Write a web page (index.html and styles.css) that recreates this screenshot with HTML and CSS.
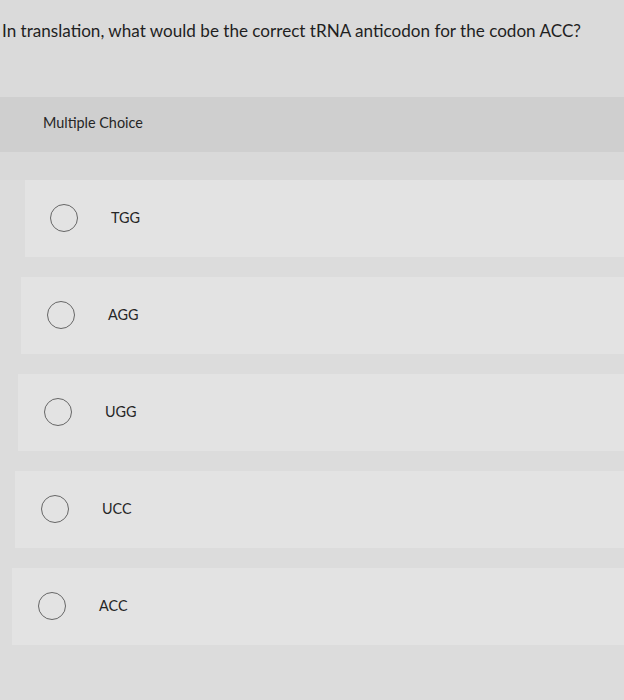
FILE: index.html
```html
<!DOCTYPE html>
<html lang="en">
<head>
<meta charset="utf-8">
<title>Multiple Choice</title>
<link rel="stylesheet" href="styles.css">
</head>
<body>
<div class="page">
  <div class="question">In translation, what would be the correct tRNA anticodon for the codon ACC?</div>
  <div class="type-bar">Multiple Choice</div>
  <div class="spacer"></div>
  <ul class="options">
    <li class="option o1"><span class="radio"></span><span class="label">TGG</span></li>
    <li class="option o2"><span class="radio"></span><span class="label">AGG</span></li>
    <li class="option o3"><span class="radio"></span><span class="label">UGG</span></li>
    <li class="option o4"><span class="radio"></span><span class="label">UCC</span></li>
    <li class="option o5"><span class="radio"></span><span class="label">ACC</span></li>
  </ul>
</div>
</body>
</html>
```
FILE: styles.css
```css
html, body {
  margin: 0;
  padding: 0;
}
body {
  background: #dcdcdc;
  font-family: Lato, "Open Sans", "Liberation Sans", sans-serif;
  color: #2e2e2e;
}
.page {
  width: 624px;
  height: 700px;
  overflow: hidden;
  background: #dcdcdc;
}
.question {
  height: 97px;
  box-sizing: border-box;
  padding: 20px 0 0 2px;
  font-size: 17.1px;
  line-height: 22px;
  color: #1f1f1f;
  background: #dadada;
}
.type-bar {
  height: 55px;
  box-sizing: border-box;
  padding: 17px 0 0 43px;
  font-size: 14.4px;
  line-height: 18px;
  background: #cfcfcf;
  color: #262626;
}
.spacer {
  height: 28px;
  background: #d9d9d9;
}
.options {
  list-style: none;
  margin: 0;
  padding: 0;
  display: flex;
  flex-direction: column;
  gap: 20px;
}
.option {
  height: 77px;
  display: flex;
  align-items: center;
  background: #e3e3e3;
  box-sizing: border-box;
  padding-bottom: 2px;
}
.o1 { margin-left: 25px; padding-left: 25px; }
.o2 { margin-left: 21px; padding-left: 26px; }
.o3 { margin-left: 18px; padding-left: 26px; }
.o4 { margin-left: 15px; padding-left: 26px; }
.o5 { margin-left: 12px; padding-left: 26px; }
.radio {
  width: 28px;
  height: 28px;
  border: 1.5px solid #666;
  border-radius: 50%;
  box-sizing: border-box;
  flex: none;
}
.label {
  margin-left: 33px;
  font-size: 14.4px;
  color: #262626;
}
```
